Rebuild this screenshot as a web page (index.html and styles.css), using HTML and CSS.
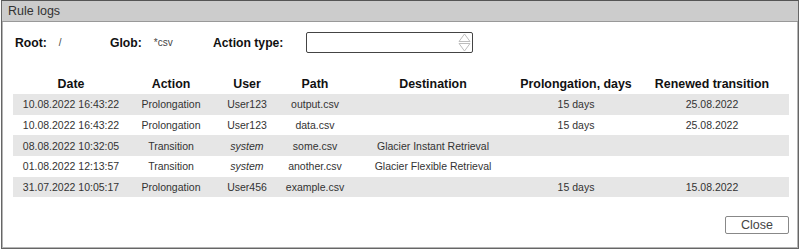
FILE: index.html
```html
<!DOCTYPE html>
<html lang="en">
<head>
    <meta charset="UTF-8">
    <title>Rule logs</title>
    <link rel="stylesheet" href="styles.css">
</head>
<body>
    <div class="window">
        <div class="title-bar">Rule logs</div>

        <div class="content">
            <div class="filters">
                <div class="filter filter-root">
                    <span class="filter-label">Root:</span>
                    <span class="filter-value">/</span>
                </div>
                <div class="filter filter-glob">
                    <span class="filter-label">Glob:</span>
                    <span class="filter-value">*csv</span>
                </div>
                <div class="filter">
                    <span class="filter-label">Action type:</span>
                    <div class="select">
                        <svg class="spinner" width="13" height="19" viewBox="0 0 13 19">
                            <path d="M6.5 1 L12 8.5 L1 8.5 Z" fill="none" stroke="#bdbdbd" stroke-width="1"/>
                            <path d="M1 10.5 L12 10.5 L6.5 18 Z" fill="none" stroke="#bdbdbd" stroke-width="1"/>
                        </svg>
                    </div>
                </div>
            </div>

            <table class="logs">
                <colgroup>
                    <col class="c-date">
                    <col class="c-action">
                    <col class="c-user">
                    <col class="c-path">
                    <col class="c-dest">
                    <col class="c-days">
                    <col class="c-renewed">
                </colgroup>
                <thead>
                    <tr>
                        <th>Date</th>
                        <th>Action</th>
                        <th>User</th>
                        <th>Path</th>
                        <th>Destination</th>
                        <th>Prolongation, days</th>
                        <th>Renewed transition</th>
                    </tr>
                </thead>
                <tbody>
                    <tr>
                        <td>10.08.2022 16:43:22</td>
                        <td>Prolongation</td>
                        <td>User123</td>
                        <td>output.csv</td>
                        <td></td>
                        <td>15 days</td>
                        <td>25.08.2022</td>
                    </tr>
                    <tr>
                        <td>10.08.2022 16:43:22</td>
                        <td>Prolongation</td>
                        <td>User123</td>
                        <td>data.csv</td>
                        <td></td>
                        <td>15 days</td>
                        <td>25.08.2022</td>
                    </tr>
                    <tr>
                        <td>08.08.2022 10:32:05</td>
                        <td>Transition</td>
                        <td class="system">system</td>
                        <td>some.csv</td>
                        <td>Glacier Instant Retrieval</td>
                        <td></td>
                        <td></td>
                    </tr>
                    <tr>
                        <td>01.08.2022 12:13:57</td>
                        <td>Transition</td>
                        <td class="system">system</td>
                        <td>another.csv</td>
                        <td>Glacier Flexible Retrieval</td>
                        <td></td>
                        <td></td>
                    </tr>
                    <tr>
                        <td>31.07.2022 10:05:17</td>
                        <td>Prolongation</td>
                        <td>User456</td>
                        <td>example.csv</td>
                        <td></td>
                        <td>15 days</td>
                        <td>15.08.2022</td>
                    </tr>
                </tbody>
            </table>

            <div class="footer">
                <button class="close-button">Close</button>
            </div>
        </div>
    </div>
</body>
</html>
```

FILE: styles.css
```css
body {
    margin: 0;
    font-family: 'Liberation Sans', Arial, sans-serif;
    color: #333;
    background-color: white;
}

.window {
    margin: 0 1px;
    height: 249px;
    box-sizing: border-box;
    border: 1px solid #666;
    border-top-color: #555;
    box-shadow: inset 0 0 0 1px #b5b5b5;
}

.title-bar {
    height: 20px;
    line-height: 20px;
    padding-left: 6px;
    background-color: #cccccc;
    border-bottom: 1px solid #999;
    font-size: 12.5px;
    color: #333;
}

.content {
    padding: 10px 9px 0 11px;
}

.filters {
    display: flex;
    align-items: center;
    height: 21px;
}

.filter {
    display: flex;
    align-items: center;
}

.filter-root {
    width: 95px;
    padding-left: 2px;
}

.filter-glob {
    width: 103px;
}

.filter-label {
    font-weight: bold;
    font-size: 12.2px;
    color: #111;
}

.filter-value {
    margin-left: 12px;
    font-size: 10px;
    color: #444;
}

.select {
    margin-left: 23px;
    width: 167px;
    height: 21px;
    box-sizing: border-box;
    border: 1px solid #444;
    border-radius: 2px;
    display: flex;
    justify-content: flex-end;
    align-items: center;
    padding-right: 1px;
}

.logs {
    margin-top: 20px;
    width: 776px;
    border-collapse: collapse;
    table-layout: fixed;
}

.c-date { width: 116px; }
.c-action { width: 84px; }
.c-user { width: 68px; }
.c-path { width: 68px; }
.c-dest { width: 168px; }
.c-days { width: 118px; }
.c-renewed { width: 154px; }

.logs th {
    height: 21px;
    padding: 0;
    font-size: 12.4px;
    font-weight: bold;
    color: #111;
    text-align: center;
    white-space: nowrap;
}

.logs td {
    height: 20.7px;
    padding: 0;
    font-size: 10.5px;
    color: #333;
    text-align: center;
    white-space: nowrap;
}

.logs tbody tr:nth-child(odd) {
    background-color: #e6e6e6;
}

.logs td.system {
    font-style: italic;
}

.footer {
    display: flex;
    justify-content: flex-end;
    margin-top: 19px;
}

.close-button {
    width: 64px;
    height: 18px;
    padding: 0;
    background-color: white;
    border: 1px solid #888;
    border-radius: 2px;
    font-family: 'Liberation Sans', Arial, sans-serif;
    font-size: 12.5px;
    color: #444;
    cursor: pointer;
}
```
